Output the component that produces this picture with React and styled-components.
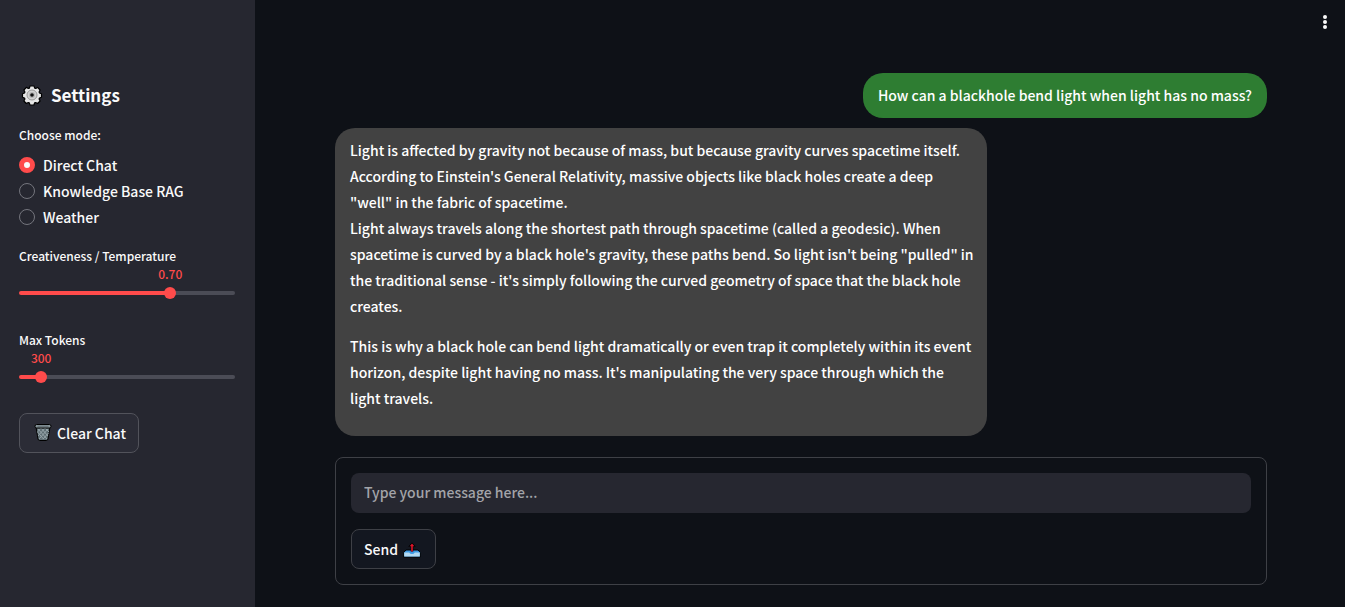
import React, { useState } from "react";
import styled, { createGlobalStyle } from "styled-components";

const GlobalStyle = createGlobalStyle`
  *, *::before, *::after { box-sizing: border-box; }
  body {
    margin: 0;
    background: #0e1117;
    color: #fafafa;
    font-family: "Noto Sans CJK JP", "Noto Sans", sans-serif;
    font-size: 14px;
    font-weight: 500;
    line-height: 26px;
  }
  button, input { font: inherit; color: inherit; }
`;

const Layout = styled.div`
  display: flex;
  min-height: 100vh;
`;

const Sidebar = styled.aside`
  flex: 0 0 255px;
  padding: 80px 20px 24px 19px;
  background: #262730;
`;

const Title = styled.h1`
  display: flex;
  align-items: center;
  gap: 8px;
  margin: 0 0 14px;
  padding-left: 2px;
  font-size: 17px;
  font-weight: 700;
  line-height: 30px;
`;

const ModeGroup = styled.fieldset`
  margin: 0 0 15px;
  padding: 0;
  border: 0;
`;

const Legend = styled.legend`
  margin-bottom: 6px;
  padding: 0;
  font-size: 12px;
  line-height: 22px;
`;

const RadioLabel = styled.label`
  display: flex;
  align-items: center;
  gap: 8px;
  cursor: pointer;
`;

const Radio = styled.input`
  appearance: none;
  width: 16px;
  height: 16px;
  margin: 0;
  border: 1px solid #74757d;
  border-radius: 50%;
  &:checked {
    border: 5px solid #ff4b4b;
    background: #fafafa;
  }
`;

const SliderField = styled.div`
  margin-bottom: 34px;
  font-size: 12px;
`;

const SliderLabel = styled.label`
  display: block;
  line-height: 21px;
`;

const SliderValue = styled.output`
  display: block;
  width: max-content;
  line-height: 16px;
  color: #ff4b4b;
  transform: translateX(-50%);
`;

const Track = styled.div`
  display: flex;
  align-items: center;
  height: 4px;
  margin: 9px 0 0;
  border-radius: 4px;
`;

const Range = styled.input`
  appearance: none;
  flex: none;
  width: calc(100% + 12px);
  height: 12px;
  margin: 0 -6px;
  background: transparent;
  cursor: pointer;
  &::-webkit-slider-thumb {
    appearance: none;
    width: 12px;
    height: 12px;
    border-radius: 50%;
    background: #ff4b4b;
  }
`;

const Button = styled.button`
  display: inline-flex;
  align-items: center;
  gap: 5px;
  height: 40px;
  padding: 0 ${(p) => p.$end}px 1px ${(p) => p.$start}px;
  border: 1px solid ${(p) => p.$border};
  border-radius: 8px;
  background: ${(p) => p.$fill};
  white-space: nowrap;
  cursor: pointer;
`;

const Main = styled.main`
  flex: 1;
  min-width: 0;
  display: flex;
  flex-direction: column;
`;

const Header = styled.header`
  display: flex;
  justify-content: flex-end;
  height: 60px;
  padding: 12px 10px;
`;

const MenuButton = styled.button`
  display: grid;
  place-items: center;
  width: 20px;
  height: 20px;
  padding: 0;
  border: 0;
  background: none;
  cursor: pointer;
`;

const Content = styled.div`
  display: flex;
  flex-direction: column;
  padding: 13px 78px 22px 80px;
`;

const Bubble = styled.div`
  max-width: 70%;
  margin-bottom: 10px;
  padding: 9px 15px 10px;
  border-radius: 20px;
  color: #fff;
`;

const UserBubble = styled(Bubble)`
  align-self: flex-end;
  background: #2e7d32;
`;

const BotBubble = styled(Bubble)`
  align-self: flex-start;
  width: 70%;
  margin-bottom: 21px;
  padding: 9px 12px 25px 15px;
  background: #424242;
`;

const Paragraph = styled.p`
  margin: 0;
  & + & { margin-top: 14px; }
`;

const Composer = styled.form`
  display: flex;
  flex-direction: column;
  align-items: flex-start;
  gap: 16px;
  padding: 15px;
  border: 1px solid #3e4046;
  border-radius: 8px;
`;

const MessageInput = styled.input`
  width: 100%;
  height: 40px;
  padding: 0 13px 2px;
  border: 0;
  border-radius: 8px;
  outline: none;
  background: #262730;
  &::placeholder { color: #a3a4a9; opacity: 1; }
`;

const GearIcon = () => (
  <svg width="22" height="22" viewBox="0 0 22 22" aria-hidden="true">
    <path
      d="M9 2h4l.7 2.100 1 .4L16.600 3.400l2.500 2.600-1 2 .4 1 2 .8v3.400l-2 .8-.4 1 1 2-2.500 2.500-2-1-1 .4-.7 2.100H9l-.7-2.100-1-.4-2 1L2.900 17l1-2-.4-1-2-.8V9.800l2-.8.4-1-1-2L5.400 3.400l2 1.100 1-.4z"
      fill="#e6e6e6"
      stroke="#000"
      strokeWidth="1.200"
      strokeLinejoin="round"
    />
    <circle cx="11" cy="11" r="5" fill="#d2d2d2" stroke="#9a9a9a" />
    <circle cx="11" cy="11" r="3" fill="#b5b5b5" />
    <circle cx="11" cy="11" r="1.800" fill="#111" />
  </svg>
);

const TrashIcon = () => (
  <svg width="18" height="19" viewBox="0 0 18 19" aria-hidden="true">
    <path d="M2 4l2 12q.3 1.500 1.800 1.500h6.400q1.500 0 1.800-1.500L16 4z" fill="#5f6e74" stroke="#000" strokeWidth="1" />
    <path d="M4 6l9 10M7 5l7 8M11 5l4 4M3.500 9l6 7M14 6L5 16M11 5l-7 8M7 5L3.500 9M14.500 10L9 16" stroke="#95a4a9" strokeWidth="1" />
    <rect x="1" y="1.500" width="16" height="3.500" rx="1.700" fill="#8b999e" stroke="#000" />
    <path d="M3.500 3.200h11" stroke="#5d6b70" />
  </svg>
);

const OutboxIcon = () => (
  <svg width="18" height="18" viewBox="0 0 18 18" aria-hidden="true">
    <path d="M3 10h12l2.300 2.500V17H.7v-4.500z" fill="#3d9be6" stroke="#000" strokeWidth="1" />
    <path d="M1.200 12.500h5q.8 1.500 2.800 1.500t2.800-1.500h5v4H1.200z" fill="#b3daf2" />
    <path d="M9 2.500l3.800 4.300h-2.500v4.700H7.700V6.800H5.200z" fill="#000" />
    <path d="M9 3.500l2.300 2.700H9.800v5.300H8.200V6.200H6.700z" fill="#e0162b" />
  </svg>
);

const DotsIcon = () => (
  <svg width="6" height="16" viewBox="0 0 6 16" fill="#fafafa" aria-hidden="true">
    <circle cx="3" cy="3" r="2" />
    <circle cx="3" cy="8" r="2" />
    <circle cx="3" cy="13" r="2" />
  </svg>
);

const modes = ["Direct Chat", "Knowledge Base RAG", "Weather"];

function Slider({ id, label, min, max, step, value, onChange, format }) {
  const percent = ((value - min) / (max - min)) * 100;
  return (
    <SliderField>
      <SliderLabel htmlFor={id}>{label}</SliderLabel>
      <SliderValue htmlFor={id} style={{ marginLeft: `${percent}%` }}>
        {format(value)}
      </SliderValue>
      <Track style={{ background: `linear-gradient(to right, #ff4b4b ${percent}%, #4b4c56 ${percent}%)` }}>
        <Range
          id={id}
          type="range"
          min={min}
          max={max}
          step={step}
          value={value}
          onChange={(e) => onChange(Number(e.target.value))}
        />
      </Track>
    </SliderField>
  );
}

export default function App() {
  const [mode, setMode] = useState(modes[0]);
  const [temperature, setTemperature] = useState(0.7);
  const [tokens, setTokens] = useState(300);

  return (
    <Layout>
      <GlobalStyle />
      <Sidebar>
        <Title>
          <GearIcon />
          Settings
        </Title>
        <ModeGroup>
          <Legend>Choose mode:</Legend>
          {modes.map((name) => (
            <RadioLabel key={name}>
              <Radio type="radio" name="mode" checked={mode === name} onChange={() => setMode(name)} />
              {name}
            </RadioLabel>
          ))}
        </ModeGroup>
        <Slider
          id="temperature"
          label="Creativeness / Temperature"
          min={0}
          max={1}
          step={0.01}
          value={temperature}
          onChange={setTemperature}
          format={(v) => v.toFixed(2)}
        />
        <Slider
          id="tokens"
          label="Max Tokens"
          min={100}
          max={2048}
          step={1}
          value={tokens}
          onChange={setTokens}
          format={String}
        />
        <Button type="button" $start={14} $end={12} $border="#52535b" $fill="#2b2c36">
          <TrashIcon />
          Clear Chat
        </Button>
      </Sidebar>
      <Main>
        <Header>
          <MenuButton type="button" aria-label="Main menu">
            <DotsIcon />
          </MenuButton>
        </Header>
        <Content>
          <UserBubble>How can a blackhole bend light when light has no mass?</UserBubble>
          <BotBubble>
            <Paragraph>
              Light is affected by gravity not because of mass, but because gravity curves spacetime itself.
              According to Einstein's General Relativity, massive objects like black holes create a deep
              <br />
              "well" in the fabric of spacetime.
              <br />
              Light always travels along the shortest path through spacetime (called a geodesic). When
              <br />
              spacetime is curved by a black hole's gravity, these paths bend. So light isn't being "pulled" in
              the traditional sense - it's simply following the curved geometry of space that the black hole
              <br />
              creates.
            </Paragraph>
            <Paragraph>
              This is why a black hole can bend light dramatically or even trap it completely within its event
              horizon, despite light having no mass. It's manipulating the very space through which the
              <br />
              light travels.
            </Paragraph>
          </BotBubble>
          <Composer onSubmit={(e) => e.preventDefault()}>
            <MessageInput type="text" aria-label="Message" placeholder="Type your message here..." />
            <Button type="submit" $start={12} $end={14} $border="#3e4046" $fill="#131720">
              Send
              <OutboxIcon />
            </Button>
          </Composer>
        </Content>
      </Main>
    </Layout>
  );
}
